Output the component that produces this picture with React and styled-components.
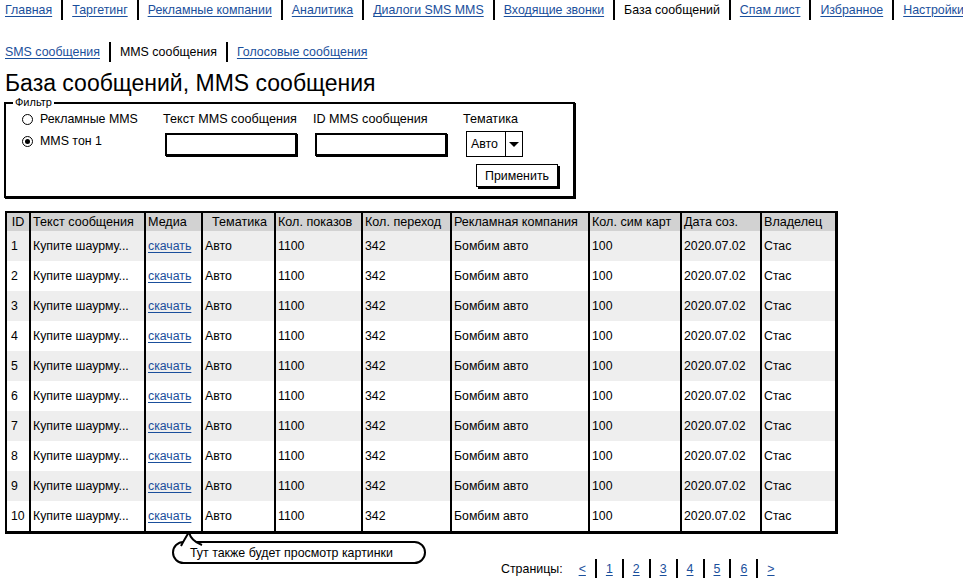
import React from "react";
import styled, { createGlobalStyle } from "styled-components";

const GlobalStyle = createGlobalStyle`
  body {
    margin: 0;
    background: #fff;
    font-family: "Liberation Sans", Arial, sans-serif;
    font-size: 12.4px;
    color: #000;
  }
`;

const Page = styled.div`
  width: 963px;
  height: 580px;
  padding-left: 5px;
  box-sizing: border-box;
  overflow: hidden;
`;

const NavBar = styled.nav`
  display: flex;
  align-items: stretch;
  height: 20px;
  margin-top: ${(p) => p.$top || 0}px;
`;

const Tab = styled.a`
  display: flex;
  align-items: center;
  padding: 0 9px;
  border-left: 2px solid #000;
  color: ${(p) => (p.$active ? "#000" : "#1a4f9c")};
  text-decoration: ${(p) => (p.$active ? "none" : "underline")};
  text-underline-offset: 2px;
  white-space: nowrap;

  &:first-child {
    border-left: none;
    padding-left: 0;
  }
`;

const Title = styled.h1`
  margin: 9px 0 0;
  font-size: 23px;
  line-height: 24px;
  font-weight: normal;
`;

const Filter = styled.fieldset`
  margin: 1px 0 0 -1px;
  width: 571px;
  height: 102px;
  box-sizing: border-box;
  padding: 3px 0 8px 16px;
  border: 2px solid #000;
  box-shadow: 1px 1px 0 #000;
  display: flex;
  align-items: flex-start;
`;

const Legend = styled.legend`
  font-size: 11px;
  line-height: 13px;
  padding: 0 2px;
  margin-left: -9px;
`;

const RadioCol = styled.div`
  width: 141px;
  display: flex;
  flex-direction: column;
  gap: 8px;
`;

const RadioRow = styled.label`
  display: flex;
  align-items: center;
  gap: 7px;
  line-height: 14px;
  white-space: nowrap;
`;

const RadioMark = styled.span`
  width: 11px;
  height: 11px;
  flex: none;
  box-sizing: border-box;
  border: 1.5px solid #000;
  border-radius: 50%;
  display: flex;
  align-items: center;
  justify-content: center;

  &::after {
    content: "";
    width: 5px;
    height: 5px;
    border-radius: 50%;
    background: ${(p) => (p.$checked ? "#000" : "transparent")};
  }
`;

const FieldCol = styled.div`
  width: ${(p) => p.$w || 150}px;
  display: flex;
  flex-direction: column;
`;

const FieldLabel = styled.div`
  line-height: 14px;
  white-space: nowrap;
  font-size: 12.6px;
`;

const TextBox = styled.div`
  margin: 7px 0 0 2px;
  width: 132px;
  height: 23px;
  box-sizing: border-box;
  border: 2px solid #000;
  box-shadow: 1px 1px 0 #000;
`;

const Select = styled.div`
  margin: 5px 0 0 3px;
  display: flex;
  height: 26px;
`;

const SelectValue = styled.div`
  width: 40px;
  box-sizing: border-box;
  border: 1.5px solid #000;
  display: flex;
  align-items: center;
  padding-left: 4px;
`;

const SelectArrow = styled.div`
  width: 17px;
  box-sizing: border-box;
  border: 1.5px solid #000;
  border-left: none;
  display: flex;
  align-items: center;
  justify-content: center;

  &::after {
    content: "";
    border-left: 5px solid transparent;
    border-right: 5px solid transparent;
    border-top: 5px solid #000;
  }
`;

const ApplyButton = styled.button`
  margin: 7px 0 0 13px;
  width: 82px;
  height: 23px;
  box-sizing: border-box;
  background: #fff;
  border: 1.5px solid #000;
  box-shadow: 2px 2px 0 #000;
  font-family: inherit;
  font-size: 12.4px;
  padding: 0;
`;

const Table = styled.table`
  margin-top: 13px;
  border-collapse: separate;
  border-spacing: 0;
  table-layout: fixed;
  width: 833px;
  border-left: 2px solid #000;
  border-top: 2px solid #000;
  border-right: 3px solid #000;
  border-bottom: 3px solid #000;
`;

const HeadCell = styled.th`
  height: 18px;
  padding: 0 0 0 2px;
  background: #d2d2d2;
  font-weight: normal;
  font-size: 12.6px;
  text-align: ${(p) => p.$align || "left"};
  border-left: 2px solid #000;
  white-space: nowrap;
  overflow: hidden;
  box-sizing: border-box;

  &:first-child {
    border-left: none;
    text-align: center;
    padding: 0;
  }
`;

const Row = styled.tr`
  background: ${(p) => (p.$odd ? "#eeeeee" : "#fff")};
`;

const Cell = styled.td`
  height: 30px;
  padding: 0 0 0 2px;
  border-left: 2px solid #000;
  white-space: nowrap;
  overflow: hidden;
  box-sizing: border-box;
  font-size: 12.3px;

  &:first-child {
    border-left: none;
    padding-left: 4px;
  }
`;

const Link = styled.a`
  color: #1a4f9c;
  text-decoration: underline;
  text-underline-offset: 2px;
`;

const Bottom = styled.div`
  display: flex;
  align-items: flex-start;
`;

const Bubble = styled.div`
  position: relative;
  margin: 7px 0 0 167px;
  width: 254px;
  height: 23px;
  box-sizing: border-box;
  border: 2px solid #000;
  border-radius: 12px;
  display: flex;
  align-items: center;
  padding-left: 16px;
  white-space: nowrap;
`;

const Tail = styled.svg`
  position: absolute;
  left: 6px;
  top: -12px;
`;

const Pager = styled.div`
  margin: 25px 0 0 75px;
  display: flex;
  align-items: stretch;
  height: 19px;
`;

const PagerLabel = styled.span`
  display: flex;
  align-items: center;
  margin-right: 16px;
`;

const PageList = styled.div`
  display: flex;
  align-items: stretch;
`;

const cols = [22, 115, 57, 73, 87, 89, 138, 92, 80, 75];
const headers = [
  "ID",
  "Текст сообщения",
  "Медиа",
  "Тематика",
  "Кол. показов",
  "Кол. переход",
  "Рекламная компания",
  "Кол. сим карт",
  "Дата соз.",
  "Владелец",
];

const topTabs = [
  "Главная",
  "Таргетинг",
  "Рекламные компании",
  "Аналитика",
  "Диалоги SMS MMS",
  "Входящие звонки ",
  "База сообщений",
  "Спам лист",
  "Избранное",
  "Настройки",
];

const rows = Array.from({ length: 10 }, (_, i) => i + 1);

export default function App() {
  return (
    <Page>
      <GlobalStyle />
      <NavBar>
        {topTabs.map((t) => (
          <Tab key={t} $active={t === "База сообщений"}>
            {t}
          </Tab>
        ))}
      </NavBar>
      <NavBar $top={22}>
        <Tab>SMS сообщения</Tab>
        <Tab $active>MMS сообщения</Tab>
        <Tab>Голосовые сообщения</Tab>
      </NavBar>
      <Title>База сообщений, MMS сообщения</Title>

      <Filter>
        <Legend>Фильтр</Legend>
        <RadioCol>
          <RadioRow>
            <RadioMark />
            Рекламные MMS
          </RadioRow>
          <RadioRow>
            <RadioMark $checked />
            MMS тон 1
          </RadioRow>
        </RadioCol>
        <FieldCol>
          <FieldLabel>Текст MMS сообщения</FieldLabel>
          <TextBox />
        </FieldCol>
        <FieldCol>
          <FieldLabel>ID MMS сообщения</FieldLabel>
          <TextBox />
        </FieldCol>
        <FieldCol $w={100}>
          <FieldLabel>Тематика</FieldLabel>
          <Select>
            <SelectValue>Авто</SelectValue>
            <SelectArrow />
          </Select>
          <ApplyButton>Применить</ApplyButton>
        </FieldCol>
      </Filter>

      <Table>
        <colgroup>
          {cols.map((w, i) => (
            <col key={i} style={{ width: w }} />
          ))}
        </colgroup>
        <thead>
          <tr>
            {headers.map((h) => (
              <HeadCell key={h} $align={h === "Тематика" ? "center" : "left"}>
                {h}
              </HeadCell>
            ))}
          </tr>
        </thead>
        <tbody>
          {rows.map((n) => (
            <Row key={n} $odd={n % 2 === 1}>
              <Cell>{n}</Cell>
              <Cell>Купите шаурму...</Cell>
              <Cell>
                <Link>скачать</Link>
              </Cell>
              <Cell>Авто</Cell>
              <Cell>1100</Cell>
              <Cell>342</Cell>
              <Cell>Бомбим авто</Cell>
              <Cell>100</Cell>
              <Cell>2020.07.02</Cell>
              <Cell>Стас</Cell>
            </Row>
          ))}
        </tbody>
      </Table>

      <Bottom>
        <Bubble>
          <Tail width="24" height="16" viewBox="0 0 24 16">
            <path
              d="M1 15 C3 11 6 6 9 1 C10 6 14 11 22 14"
              fill="#fff"
              stroke="#000"
              strokeWidth="2"
            />
            <path d="M2 15 L22 15 L22 16 L2 16 Z" fill="#fff" />
          </Tail>
          Тут также будет просмотр картинки
        </Bubble>
        <Pager>
          <PagerLabel>Страницы:</PagerLabel>
          <PageList>
            {["<", "1", "2", "3", "4", "5", "6", ">"].map((p) => (
              <Tab key={p}>{p}</Tab>
            ))}
          </PageList>
        </Pager>
      </Bottom>
    </Page>
  );
}
